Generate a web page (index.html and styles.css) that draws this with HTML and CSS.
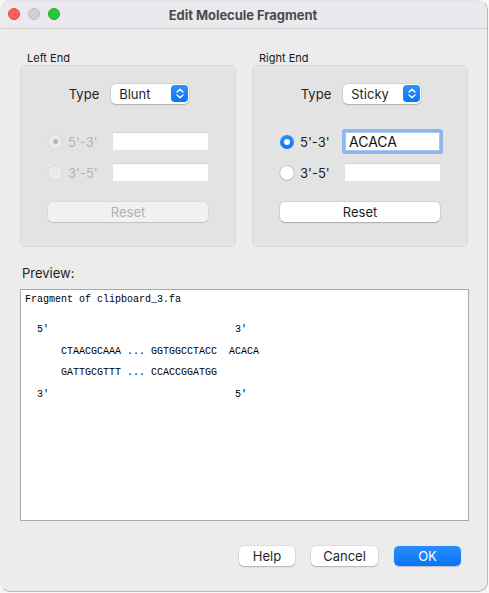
FILE: index.html
```html
<!DOCTYPE html>
<html>
<head>
<meta charset="utf-8">
<link rel="stylesheet" href="styles.css">
</head>
<body>
<div class="window">
  <div class="titlebar">
    <div class="lights">
      <span class="light red"></span>
      <span class="light gray"></span>
      <span class="light green"></span>
    </div>
    <div class="title">Edit Molecule Fragment</div>
  </div>
  <div class="content">
    <div class="groups">
      <section class="group">
        <div class="group-label">Left End</div>
        <div class="box">
          <div class="type-row">
            <span class="type-label">Type</span>
            <div class="popup">
              <span class="popup-text">Blunt</span>
              <span class="stepper"><svg width="16" height="17" viewBox="0 0 16 17"><path d="M5 7 L8 4.2 L11 7 M5 10 L8 12.8 L11 10" fill="none" stroke="#fff" stroke-width="1.4" stroke-linecap="round" stroke-linejoin="round"/></svg></span>
            </div>
          </div>
          <div class="radio-row first disabled">
            <span class="radio-wrap"><span class="radio checked"></span><span class="radio-label">5'-3'</span></span>
            <span class="field"></span>
          </div>
          <div class="radio-row disabled">
            <span class="radio-wrap"><span class="radio"></span><span class="radio-label">3'-5'</span></span>
            <span class="field"></span>
          </div>
          <div class="btn reset disabled">Reset</div>
        </div>
      </section>
      <section class="group">
        <div class="group-label">Right End</div>
        <div class="box">
          <div class="type-row">
            <span class="type-label">Type</span>
            <div class="popup">
              <span class="popup-text">Sticky</span>
              <span class="stepper"><svg width="16" height="17" viewBox="0 0 16 17"><path d="M5 7 L8 4.2 L11 7 M5 10 L8 12.8 L11 10" fill="none" stroke="#fff" stroke-width="1.4" stroke-linecap="round" stroke-linejoin="round"/></svg></span>
            </div>
          </div>
          <div class="radio-row first">
            <span class="radio-wrap"><span class="radio checked"></span><span class="radio-label">5'-3'</span></span>
            <span class="field focused">ACACA</span>
          </div>
          <div class="radio-row">
            <span class="radio-wrap"><span class="radio"></span><span class="radio-label">3'-5'</span></span>
            <span class="field"></span>
          </div>
          <div class="btn reset">Reset</div>
        </div>
      </section>
    </div>
    <div class="preview-label">Preview:</div>
    <div class="preview">
      <div class="pv-head">Fragment of clipboard_3.fa</div>
      <div class="pv-body">
        <div class="pv-line">  5'                               3'</div>
        <div class="pv-line">      CTAACGCAAA ... GGTGGCCTACC  ACACA</div>
        <div class="pv-line">      GATTGCGTTT ... CCACCGGATGG</div>
        <div class="pv-line">  3'                               5'</div>
      </div>
    </div>
    <div class="buttons">
      <div class="btn help">Help</div>
      <div class="btn cancel">Cancel</div>
      <div class="btn ok">OK</div>
    </div>
  </div>
</div>
</body>
</html>
```
FILE: styles.css
```css
* { box-sizing: border-box; }
html, body { margin: 0; padding: 0; }
body {
  background: #f7f7f7;
  width: 489px;
  height: 593px;
  overflow: hidden;
  font-family: "Inter", "Liberation Sans", sans-serif;
  font-size: 13px;
  color: #222;
}
.window {
  width: 488px;
  height: 592px;
  background: #ececec;
  border: 1px solid #b9b9b9;
  border-left-color: #ececec;
  border-top-color: #e4e2e6;
  border-radius: 10px;
  overflow: hidden;
}
.titlebar {
  height: 28px;
  background: #ebe9ed;
  border-bottom: 1px solid #cfcfcf;
  position: relative;
  display: flex;
  align-items: center;
  justify-content: center;
}
.lights {
  position: absolute;
  left: 7px;
  top: 7px;
  display: flex;
  gap: 8px;
}
.light {
  width: 12px;
  height: 12px;
  border-radius: 50%;
  display: block;
}
.light.red { background: #fe5f57; border: 0.5px solid #e2463f; }
.light.gray { background: #d1d0d2; border: 0.5px solid #bdbcbe; }
.light.green { background: #28c840; border: 0.5px solid #1aab29; }
.title {
  font-weight: 700;
  font-size: 13px;
  color: #4b4b4b;
  letter-spacing: -0.05px;
  margin-top: 1px;
  margin-left: -2px;
}
.content {
  padding: 23px 19px 0 19px;
}
.groups {
  display: flex;
  gap: 16px;
}
.group { width: 216px; }
.group-label {
  font-size: 11px;
  line-height: 13px;
  padding-left: 7px;
  color: #1a1a1a;
}
.box {
  background: #e3e3e3;
  border: 1px solid #d9d9d9;
  border-radius: 5px;
  padding: 17px 27px 24px 27px;
  display: flex;
  flex-direction: column;
}
.type-row {
  display: flex;
  align-items: center;
  justify-content: center;
  gap: 12px;
  height: 20px;
  padding-left: 2px;
  padding-top: 1px;
}
.type-label { font-size: 13px; color: #1f1f1f; }
.popup {
  width: 78px;
  height: 20px;
  background: #fff;
  border-radius: 5px;
  box-shadow: 0 0 0 0.5px rgba(0,0,0,0.12), 0 1px 1.5px rgba(0,0,0,0.18);
  display: flex;
  align-items: center;
  justify-content: space-between;
  padding: 0 1px 0 8px;
}
.popup-text { font-size: 13px; color: #1f1f1f; }
.stepper {
  width: 17px;
  height: 17px;
  border-radius: 4px;
  background: linear-gradient(#2f8ffc, #0c75f6);
  display: flex;
  align-items: center;
  justify-content: center;
}
.stepper svg { display: block; }
.radio-row {
  display: flex;
  align-items: center;
  justify-content: space-between;
  height: 19px;
  margin-top: 12px;
}
.radio-row.first { margin-top: 29px; }
.radio-wrap {
  display: flex;
  align-items: center;
  gap: 6px;
}
.radio {
  width: 14px;
  height: 14px;
  border-radius: 50%;
  background: #fff;
  box-shadow: 0 0 0 0.5px rgba(0,0,0,0.25), 0 0.5px 1px rgba(0,0,0,0.2);
  display: flex;
  align-items: center;
  justify-content: center;
}
.radio.checked {
  background: linear-gradient(#2f8ffc, #0c75f6);
  box-shadow: none;
}
.radio.checked::after {
  content: "";
  width: 6px;
  height: 6px;
  border-radius: 50%;
  background: #fff;
}
.radio-label { font-size: 13px; color: #1f1f1f; }
.disabled .radio {
  background: #ebebeb;
  box-shadow: 0 0 0 0.5px rgba(0,0,0,0.1);
}
.disabled .radio.checked::after {
  background: #b5b5b5;
  width: 5px;
  height: 5px;
}
.disabled .radio-label { color: #b3b3b3; }
.field {
  width: 95px;
  height: 19px;
  background: #fff;
  border-top: 1px solid #d4d4d4;
  border-bottom: 1px solid #e4e4e4;
  font-size: 13px;
  line-height: 17px;
  padding-left: 3px;
  color: #111;
}
.field.focused {
  border: 1px solid #a9c6ee;
  box-shadow: 0 0 0 3px #8fb5ee;
  border-radius: 1px;
  font-size: 14px;
}
.btn {
  height: 20px;
  border-radius: 5px;
  background: #fff;
  box-shadow: 0 0 0 0.5px rgba(0,0,0,0.12), 0 1px 1.5px rgba(0,0,0,0.2);
  font-size: 13px;
  line-height: 20px;
  text-align: center;
  color: #1f1f1f;
}
.reset {
  margin-top: 20px;
  width: 160px;
}
.btn.disabled {
  background: #f1f1f1;
  color: #b0b0b0;
  box-shadow: 0 0 0 0.5px rgba(0,0,0,0.08), 0 0.5px 1px rgba(0,0,0,0.1);
}
.preview-label {
  margin-top: 18px;
  font-size: 13px;
  line-height: 16px;
  padding-left: 2px;
  color: #1f1f1f;
}
.preview {
  margin-top: 8px;
  width: 449px;
  height: 232px;
  background: #fff;
  border: 1px solid #a9a9a9;
  padding: 3px 4px 2px 4px;
  font-family: "Liberation Mono", "Courier New", monospace;
  font-size: 10px;
  color: #000;
}
.pv-head { line-height: 14px; white-space: pre; }
.pv-body { margin-top: 12px; }
.pv-line { line-height: 21px; white-space: pre; }
.pv-line + .pv-line { margin-top: 0.5px; }
.buttons {
  display: flex;
  justify-content: flex-end;
  gap: 16px;
  margin-top: 25px;
  padding-right: 7px;
}
.help { width: 56px; }
.cancel { width: 67px; }
.ok {
  width: 67px;
  background: linear-gradient(#2b8cfc, #0a74f7);
  color: #fff;
  box-shadow: 0 0.5px 1px rgba(0,0,0,0.2);
}
```
